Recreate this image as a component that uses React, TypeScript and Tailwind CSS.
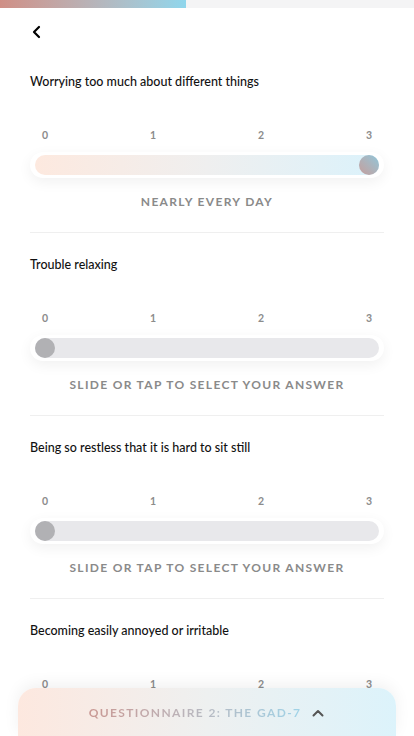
import React from "react";

type Question = {
  text: string;
  value: number | null;
};

const QUESTIONS: Question[] = [
  { text: "Worrying too much about different things", value: 3 },
  { text: "Trouble relaxing", value: null },
  { text: "Being so restless that it is hard to sit still", value: null },
  { text: "Becoming easily annoyed or irritable", value: null },
];

const ANSWERS = ["NOT AT ALL", "SEVERAL DAYS", "MORE THAN HALF THE DAYS", "NEARLY EVERY DAY"];

function Slider({ value }: { value: number | null }) {
  const selected = value !== null;
  return (
    <div className="rounded-full bg-white px-[5px] py-[3px] shadow-[0_4px_14px_rgba(0,0,0,0.06)]">
      <div
        className={
          selected
            ? "flex h-5 items-center justify-end rounded-full bg-gradient-to-r from-[#fde9df] via-[#efefef] to-[#dbf2fb]"
            : "flex h-5 items-center justify-start rounded-full bg-[#e8e8eb]"
        }
      >
        <div
          className={
            selected
              ? "h-5 w-5 rounded-full bg-gradient-to-tr from-[#c49e9c] to-[#8ec5d9]"
              : "h-5 w-5 rounded-full bg-[#b1b1b4]"
          }
        />
      </div>
    </div>
  );
}

function QuestionBlock({ q, last }: { q: Question; last: boolean }) {
  return (
    <div className="pt-[22px] first:pt-0">
      <p className="text-[12.5px] leading-5 font-medium text-[#111]">{q.text}</p>
      <div className="mt-[37px] flex justify-between px-[5px] text-[10.5px] leading-3 font-bold text-[#8c8c8c]">
        {[0, 1, 2, 3].map((n) => (
          <span key={n} className="w-5 text-center">
            {n}
          </span>
        ))}
      </div>
      <div className="mt-[11px]">
        <Slider value={q.value} />
      </div>
      {!last && (
        <>
          <p className="mt-4 text-center text-[12px] leading-4 font-bold tracking-[0.11em] text-[#8a8a8a]">
            {q.value !== null ? ANSWERS[q.value] : "SLIDE OR TAP TO SELECT YOUR ANSWER"}
          </p>
          <div className="mt-[22px] h-px bg-[#efefef]" />
        </>
      )}
    </div>
  );
}

export default function App() {
  return (
    <div
      className="relative h-[736px] w-full overflow-hidden bg-white"
      style={{ fontFamily: "Lato, 'Noto Sans', sans-serif" }}
    >
      <div className="h-2 w-full bg-[#f4f4f5]">
        <div className="h-2 w-[186px] bg-gradient-to-r from-[#cf8f86] to-[#8fd6ec]" />
      </div>

      <div className="px-[30px]">
        <button className="-ml-[9px] mt-2 flex h-8 w-8 items-center justify-center text-black">
          <svg width="12" height="14" viewBox="0 0 12 14" fill="none">
            <path d="M8 2 L3 7 L8 12" stroke="currentColor" strokeWidth="2.2" strokeLinecap="round" strokeLinejoin="round" />
          </svg>
        </button>

        <div className="mt-[24px]">
          {QUESTIONS.map((q, i) => (
            <QuestionBlock key={i} q={q} last={i === QUESTIONS.length - 1} />
          ))}
        </div>
      </div>

      <div className="absolute bottom-0 left-[18px] right-[18px] flex h-12 items-start justify-center gap-[10px] rounded-t-[18px] bg-gradient-to-r from-[#fde8df] via-[#eef0f0] to-[#dcf3fb] pt-[17px] shadow-[0_-4px_16px_rgba(0,0,0,0.06)]">
        <span className="bg-gradient-to-r from-[#c99893] to-[#9fd3e8] bg-clip-text text-[12px] leading-4 font-bold tracking-[0.115em] text-transparent">
          QUESTIONNAIRE 2: THE GAD-7
        </span>
        <svg width="14" height="14" viewBox="0 0 14 14" fill="none" className="mt-[1px]">
          <path d="M2.5 9.5 L7 5 L11.5 9.5" stroke="#555" strokeWidth="2" strokeLinecap="round" strokeLinejoin="round" />
        </svg>
      </div>
    </div>
  );
}
